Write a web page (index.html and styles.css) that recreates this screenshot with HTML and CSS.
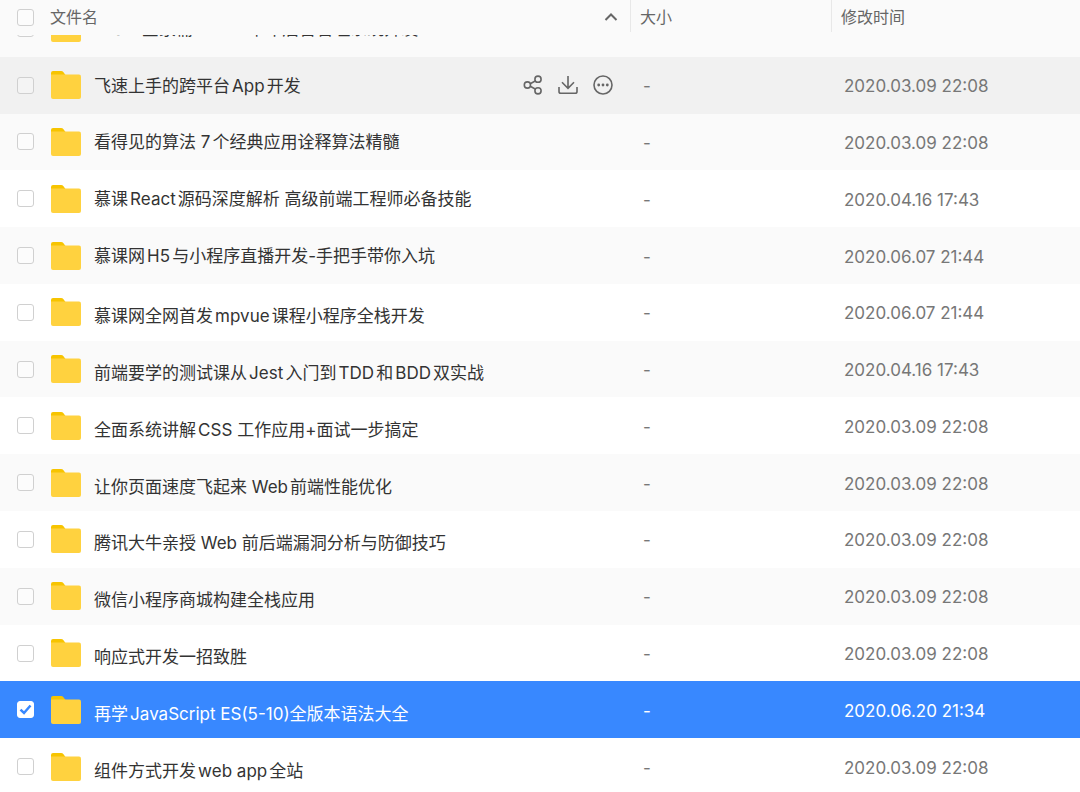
FILE: index.html
```html
<!DOCTYPE html>
<html lang="zh-CN">
<head>
<meta charset="utf-8">
<meta name="viewport" content="width=device-width, initial-scale=1">
<title>文件列表</title>
<link rel="stylesheet" href="styles.css">
</head>
<body>
<svg class="sprite" aria-hidden="true">
  <symbol id="folder" viewBox="0 0 30 28">
    <path fill="#f7c400" d="M0 8V2Q0 0 2 0H10Q11.600 0 12.500 1.300L14.500 4V8Z"/>
    <path fill="#ffd23f" d="M0 3.600H28Q30 3.600 30 5.600V26Q30 28 28 28H2Q0 28 0 26Z"/>
  </symbol>
</svg>
<table class="files">
  <thead>
    <tr class="head">
      <th class="cell cell-name" scope="col">
        <input class="check" type="checkbox" aria-label="全选">
        <button class="sort" type="button">文件名
          <svg class="chevron" viewBox="0 0 14 10" aria-hidden="true"><path d="M1.500 8L7 2.500L12.500 8"/></svg>
        </button>
      </th>
      <th class="cell cell-size" scope="col">大小</th>
      <th class="cell cell-date" scope="col">修改时间</th>
    </tr>
  </thead>
  <tbody>
    <tr class="row">
      <td class="cell cell-name"><input class="check" type="checkbox" id="f0"><svg class="folder" aria-hidden="true"><use href="#folder"/></svg><label class="name" for="f0">React全家桶+AntD 单车后台管理系统开发</label></td>
      <td class="cell cell-size">-</td><td class="cell cell-date">2020.03.09 22:08</td>
    </tr>
    <tr class="row is-hover">
      <td class="cell cell-name"><input class="check" type="checkbox" id="f1"><svg class="folder" aria-hidden="true"><use href="#folder"/></svg><label class="name" for="f1">飞速上手的跨平台App开发</label>
        <span class="actions">
          <button class="action" type="button" aria-label="分享"><svg viewBox="0 0 20 20" aria-hidden="true"><circle cx="4.400" cy="10" r="3.100"/><circle cx="15" cy="4.200" r="3.100"/><circle cx="15" cy="15.800" r="3.100"/><path d="M7.200 8.700L12.200 6M7.200 11.300L12.200 14"/></svg></button>
          <button class="action" type="button" aria-label="下载"><svg viewBox="0 0 20 20" aria-hidden="true"><path d="M10 1V13M4 7.300L10 13.300L16 7.300M1 12V16.500Q1 18.300 2.800 18.300H17.200Q19 18.300 19 16.500V12"/></svg></button>
          <button class="action" type="button" aria-label="更多"><svg viewBox="0 0 20 20" aria-hidden="true"><circle cx="10" cy="10" r="9"/><g class="dots"><circle cx="5.700" cy="10" r="1.400"/><circle cx="10" cy="10" r="1.400"/><circle cx="14.300" cy="10" r="1.400"/></g></svg></button>
        </span></td>
      <td class="cell cell-size">-</td><td class="cell cell-date">2020.03.09 22:08</td>
    </tr>
    <tr class="row">
      <td class="cell cell-name"><input class="check" type="checkbox" id="f2"><svg class="folder" aria-hidden="true"><use href="#folder"/></svg><label class="name" for="f2">看得见的算法 7个经典应用诠释算法精髓</label></td>
      <td class="cell cell-size">-</td><td class="cell cell-date">2020.03.09 22:08</td>
    </tr>
    <tr class="row">
      <td class="cell cell-name"><input class="check" type="checkbox" id="f3"><svg class="folder" aria-hidden="true"><use href="#folder"/></svg><label class="name" for="f3">慕课React源码深度解析 高级前端工程师必备技能</label></td>
      <td class="cell cell-size">-</td><td class="cell cell-date">2020.04.16 17:43</td>
    </tr>
    <tr class="row">
      <td class="cell cell-name"><input class="check" type="checkbox" id="f4"><svg class="folder" aria-hidden="true"><use href="#folder"/></svg><label class="name" for="f4">慕课网H5与小程序直播开发-手把手带你入坑</label></td>
      <td class="cell cell-size">-</td><td class="cell cell-date">2020.06.07 21:44</td>
    </tr>
    <tr class="row is-low">
      <td class="cell cell-name"><input class="check" type="checkbox" id="f5"><svg class="folder" aria-hidden="true"><use href="#folder"/></svg><label class="name" for="f5">慕课网全网首发mpvue课程小程序全栈开发</label></td>
      <td class="cell cell-size">-</td><td class="cell cell-date">2020.06.07 21:44</td>
    </tr>
    <tr class="row is-low">
      <td class="cell cell-name"><input class="check" type="checkbox" id="f6"><svg class="folder" aria-hidden="true"><use href="#folder"/></svg><label class="name" for="f6">前端要学的测试课从Jest入门到TDD和BDD双实战</label></td>
      <td class="cell cell-size">-</td><td class="cell cell-date">2020.04.16 17:43</td>
    </tr>
    <tr class="row is-low">
      <td class="cell cell-name"><input class="check" type="checkbox" id="f7"><svg class="folder" aria-hidden="true"><use href="#folder"/></svg><label class="name" for="f7">全面系统讲解CSS 工作应用+面试一步搞定</label></td>
      <td class="cell cell-size">-</td><td class="cell cell-date">2020.03.09 22:08</td>
    </tr>
    <tr class="row is-low">
      <td class="cell cell-name"><input class="check" type="checkbox" id="f8"><svg class="folder" aria-hidden="true"><use href="#folder"/></svg><label class="name" for="f8">让你页面速度飞起来 Web前端性能优化</label></td>
      <td class="cell cell-size">-</td><td class="cell cell-date">2020.03.09 22:08</td>
    </tr>
    <tr class="row is-low">
      <td class="cell cell-name"><input class="check" type="checkbox" id="f9"><svg class="folder" aria-hidden="true"><use href="#folder"/></svg><label class="name" for="f9">腾讯大牛亲授 Web 前后端漏洞分析与防御技巧</label></td>
      <td class="cell cell-size">-</td><td class="cell cell-date">2020.03.09 22:08</td>
    </tr>
    <tr class="row is-low">
      <td class="cell cell-name"><input class="check" type="checkbox" id="f10"><svg class="folder" aria-hidden="true"><use href="#folder"/></svg><label class="name" for="f10">微信小程序商城构建全栈应用</label></td>
      <td class="cell cell-size">-</td><td class="cell cell-date">2020.03.09 22:08</td>
    </tr>
    <tr class="row is-low">
      <td class="cell cell-name"><input class="check" type="checkbox" id="f11"><svg class="folder" aria-hidden="true"><use href="#folder"/></svg><label class="name" for="f11">响应式开发一招致胜</label></td>
      <td class="cell cell-size">-</td><td class="cell cell-date">2020.03.09 22:08</td>
    </tr>
    <tr class="row is-low is-selected">
      <td class="cell cell-name"><input class="check" type="checkbox" id="f12" checked><svg class="folder" aria-hidden="true"><use href="#folder"/></svg><label class="name" for="f12">再学JavaScript ES(5-10)全版本语法大全</label></td>
      <td class="cell cell-size">-</td><td class="cell cell-date">2020.06.20 21:34</td>
    </tr>
    <tr class="row is-low">
      <td class="cell cell-name"><input class="check" type="checkbox" id="f13"><svg class="folder" aria-hidden="true"><use href="#folder"/></svg><label class="name" for="f13">组件方式开发web app全站</label></td>
      <td class="cell cell-size">-</td><td class="cell cell-date">2020.03.09 22:08</td>
    </tr>
  </tbody>
</table>
</body>
</html>
```
FILE: styles.css
```css
* { box-sizing: border-box; }

body {
  margin: 0;
  height: 100vh;
  overflow: hidden;
  background: #fff;
  color: #333;
  font: 17px/24px Inter, "Noto Sans CJK SC", sans-serif;
  text-autospace: normal;
}

button {
  margin: 0;
  padding: 0;
  border: 0;
  background: none;
  color: inherit;
  font: inherit;
}

.sprite { display: none; }

.files { display: block; }

.files thead {
  display: block;
  position: sticky;
  top: 0;
  z-index: 1;
}

/* The list is scrolled part of a row under the sticky header. */
.files tbody {
  display: grid;
  grid-auto-rows: minmax(48px, 1fr);
  height: calc(100vh + 3px);
  margin-top: -35px;
}

.head,
.row {
  display: grid;
  grid-template-columns: minmax(0, 1fr) 201px 249px;
}

.cell {
  display: flex;
  align-items: center;
  padding: 0;
  text-align: left;
}

.head {
  height: 35px;
  background: #fafafa;
  color: #666;
  font-size: 16px;
}

.head .cell {
  height: 32px;
  padding-top: 2px;
  font-weight: 400;
}

.head .cell-size,
.head .cell-date {
  padding-left: 9px;
  border-left: 1px solid #e8e8e8;
}

.files .cell-name { padding-left: 17px; }

.sort {
  display: flex;
  flex: 1;
  align-items: center;
  justify-content: space-between;
  margin-left: 16px;
  padding-right: 12px;
}

.chevron {
  width: 14px;
  height: 10px;
  fill: none;
  stroke: #666;
  stroke-width: 2;
}

.row:nth-child(odd) { background: #fafafa; }
.row:nth-child(even) { background: #fff; }
.files .is-hover { background: #f1f1f1; }

.row .cell-size,
.row .cell-date {
  padding-top: 2px;
  color: #777;
}

.row .cell-size { padding-left: 13px; }
.row .cell-date { padding-left: 13px; }

.check {
  flex: none;
  width: 17px;
  height: 17px;
  margin: 0;
  border: 1px solid #d0d0d0;
  border-radius: 3px;
  background: #fff;
  appearance: none;
}

.head .check,
.row:nth-child(odd) .check { background-color: #fcfcfc; }
.row.is-hover .check { background-color: #f4f4f4; }

.row .check:checked {
  border-color: #fff;
  background: #fff url("data:image/svg+xml,%3Csvg xmlns='http://www.w3.org/2000/svg' viewBox='0 0 15 15'%3E%3Cpath d='M2.500 7.700L6 11L12.500 3.500' fill='none' stroke='%233888ff' stroke-width='2.500'/%3E%3C/svg%3E") center / 15px no-repeat;
}

.folder {
  flex: none;
  width: 30px;
  height: 28px;
  margin: 0 13px 0 17px;
}

.name {
  padding-top: 1px;
  white-space: nowrap;
}

.is-low .name { padding-top: 8px; }

.actions {
  display: flex;
  gap: 15px;
  margin-left: auto;
  padding-right: 17px;
}

.action {
  width: 20px;
  height: 20px;
}

.action svg {
  display: block;
  width: 20px;
  height: 20px;
  fill: none;
  stroke: #666;
  stroke-width: 1.6;
}

.action .dots {
  fill: #666;
  stroke: none;
}

.row.is-selected { background: #3888ff; }

.row.is-selected .cell { color: #fff; }
```
